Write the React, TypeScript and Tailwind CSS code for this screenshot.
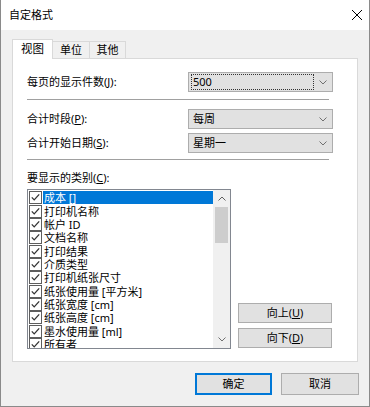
import React from 'react'

const items = ['成本 []', '打印机名称', '帐户 ID', '文档名称', '打印结果', '介质类型', '打印机纸张尺寸', '纸张使用量 [平方米]', '纸张宽度 [cm]', '纸张高度 [cm]', '墨水使用量 [ml]', '所有者', '打印者计算机']

function CheckBox() {
  return (
    <svg width="13" height="13" viewBox="0 0 13 13" className="shrink-0">
      <rect x="0.5" y="0.5" width="12" height="12" fill="#fff" stroke="#5e5e5e" />
      <path d="M2.8 6.4 L5.2 8.9 L10.2 3.4" fill="none" stroke="#333" strokeWidth="1.3" />
    </svg>
  )
}

function Chevron({ up = false }: { up?: boolean }) {
  return (
    <svg width="8" height="5" viewBox="0 0 8 5">
      <path d={up ? 'M0.5 4.5 L4 1 L7.5 4.5' : 'M0.5 0.5 L4 4 L7.5 0.5'} fill="none" stroke={up ? '#606060' : '#707070'} strokeWidth="1" />
    </svg>
  )
}

function Combo({ value, focus = false }: { value: string; focus?: boolean }) {
  return (
    <div className="w-[145px] h-[20px] border border-[#adadad] bg-[#e1e1e1] flex items-center pl-[2px]">
      <div className={'w-[123px] h-[16px] flex items-center pl-[1px] ' + (focus ? 'border border-dotted border-[#333]' : 'border border-transparent')}>{value}</div>
      <div className="flex-1 flex justify-center pt-[1px]"><Chevron /></div>
    </div>
  )
}

function Btn({ children, className = '' }: { children: React.ReactNode; className?: string }) {
  return <div className={'flex items-center justify-center border bg-[#e1e1e1] ' + className}>{children}</div>
}

export default function App() {
  return (
    <div className="w-[370px] h-[407px] bg-[#f0f0f0] border-x border-b border-[#8a8a8a] flex flex-col text-[11px] leading-[14px] text-black font-['Noto_Sans','Noto_Sans_CJK_SC',sans-serif]">
      {/* title bar */}
      <div className="h-[30px] bg-white flex items-center pl-[8px] shrink-0">
        <span className="flex-1">自定格式</span>
        <svg width="12" height="12" viewBox="0 0 12 12" className="mr-[6px]">
          <path d="M1 1 L11 11 M11 1 L1 11" stroke="#000" strokeWidth="1" />
        </svg>
      </div>

      <div className="pl-[11px] pt-[9px]">
        {/* tabs */}
        <div className="flex items-end relative z-10">
          <div className="w-[41px] h-[20px] -mb-[1px] bg-white border-x border-t border-[#d9d9d9] flex items-center justify-center pb-[1px] text-[11.5px]">视图</div>
          <div className="w-[37px] h-[17px] border-t border-r border-[#d9d9d9] flex items-center justify-center">单位</div>
          <div className="w-[36px] h-[17px] border-t border-r border-[#d9d9d9] flex items-center justify-center">其他</div>
        </div>

        {/* panel */}
        <div className="w-[346px] h-[304px] bg-white border border-[#d9d9d9] pl-[14px] pt-[13px]">
          <div className="flex items-center h-[20px]">
            <span className="w-[161px]">每页的显示件数(<u>J</u>):</span>
            <Combo value="500" focus />
          </div>
          <div className="w-[302px] h-px bg-[#a0a0a0] mt-[7px]" />
          <div className="flex items-center h-[20px] mt-[9px]">
            <span className="w-[161px]">合计时段(<u>P</u>):</span>
            <Combo value="每周" />
          </div>
          <div className="flex items-center h-[20px] mt-[4px]">
            <span className="w-[161px]">合计开始日期(<u>S</u>):</span>
            <Combo value="星期一" />
          </div>
          <div className="w-[302px] h-px bg-[#a0a0a0] mt-[6px]" />
          <div className="mt-[11px]">要显示的类别(<u>C</u>):</div>

          <div className="flex mt-[4px]">
            <div className="w-[204px] h-[160px] border border-[#828790] flex overflow-hidden">
              <div className="flex-1 pt-[1px] overflow-hidden">
                {items.map((t, i) => (
                  <div key={i} className="flex items-center h-[13.35px] leading-[13px]">
                    <div className="ml-[1px] mr-[1px]"><CheckBox /></div>
                    <div className={'flex-1 h-[13px] flex items-center pl-[1px] whitespace-nowrap ' + (i === 0 ? 'bg-[#0078d7] text-white' : '')}>{t}</div>
                  </div>
                ))}
              </div>
              <div className="w-[17px] bg-[#f0f0f0] flex flex-col shrink-0">
                <div className="h-[17px] flex items-center justify-center"><Chevron up /></div>
                <div className="h-[36px] mx-[2px] bg-[#cdcdcd]" />
                <div className="flex-1" />
                <div className="h-[17px] flex items-center justify-center"><Chevron /></div>
              </div>
            </div>
            <div className="ml-[7px] flex flex-col justify-end pb-[1px] gap-[5px]">
              <Btn className="w-[94px] h-[20px] border-[#adadad]">向上(<u>U</u>)</Btn>
              <Btn className="w-[94px] h-[20px] border-[#adadad]">向下(<u>D</u>)</Btn>
            </div>
          </div>
        </div>

        {/* dialog buttons */}
        <div className="flex justify-end gap-[9px] pr-[10px] mt-[11px]">
          <Btn className="w-[77px] h-[22px] border-2 border-[#0078d7]">确定</Btn>
          <Btn className="w-[78px] h-[22px] border-[#adadad]">取消</Btn>
        </div>
      </div>
    </div>
  )
}
